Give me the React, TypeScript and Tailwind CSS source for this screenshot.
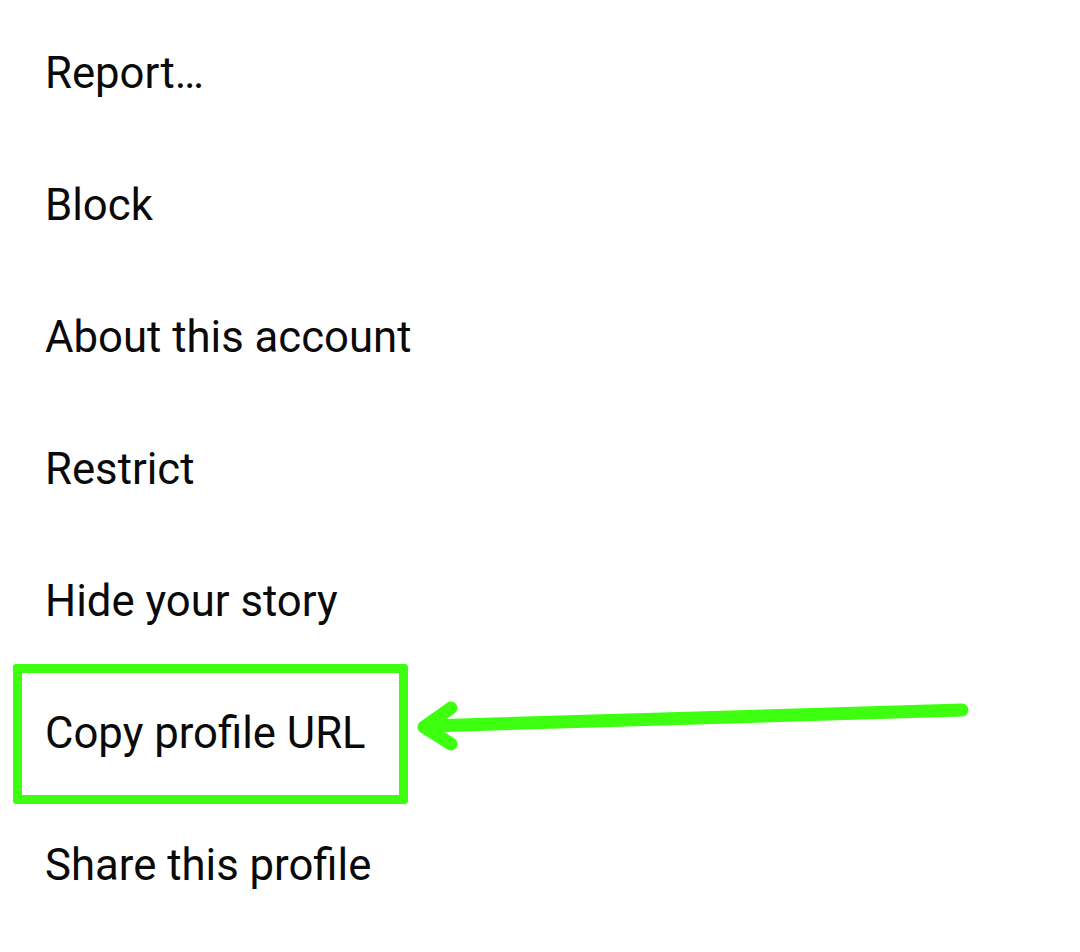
import React from 'react';

const items = [
  'Report…',
  'Block',
  'About this account',
  'Restrict',
  'Hide your story',
  'Copy profile URL',
  'Share this profile',
];

const App: React.FC = () => {
  return (
    <div className="relative w-[1080px] h-[952px] bg-white overflow-hidden font-['Roboto',sans-serif]">
      <ul className="flex flex-col pt-[8px]">
        {items.map((label) => (
          <li key={label} className="h-[132px] flex items-center pl-[45px] text-[43.7px] text-[#0a0a0a] leading-none">
            {label}
          </li>
        ))}
      </ul>

      {/* annotation: highlight box + arrow */}
      <div className="absolute left-[13px] top-[664px] w-[395px] h-[140px] border-[9px] border-[#3dff0f] rounded-[3px]" />
      <svg className="absolute left-0 top-0" width="1080" height="952" viewBox="0 0 1080 952">
        <g stroke="#3dff0f" strokeWidth="13" strokeLinecap="round" strokeLinejoin="round" fill="none">
          <line x1="962" y1="710" x2="428" y2="726" />
          <polyline points="451,708 424,727 451,744" />
        </g>
      </svg>
    </div>
  );
};

export default App;
